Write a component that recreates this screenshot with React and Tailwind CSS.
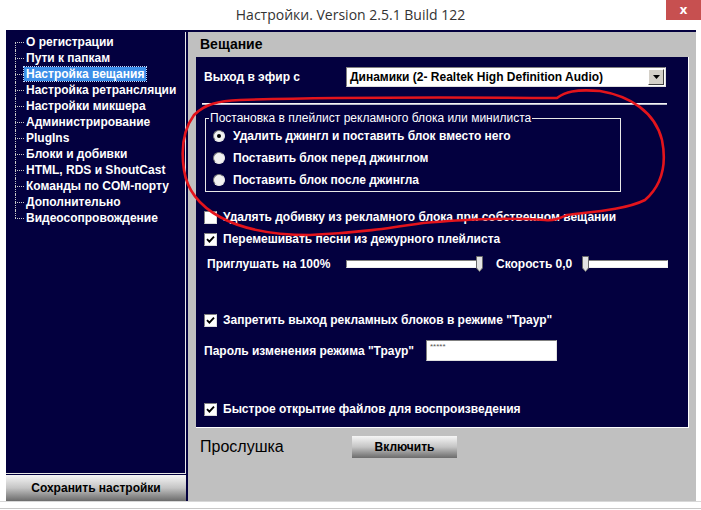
import React from "react";

const treeItems = [
  "О регистрации",
  "Пути к папкам",
  "Настройка вещания",
  "Настройка ретрансляции",
  "Настройки микшера",
  "Администрирование",
  "PlugIns",
  "Блоки и добивки",
  "HTML, RDS и ShoutCast",
  "Команды по COM-порту",
  "Дополнительно",
  "Видеосопровождение",
];

const Check = ({ checked }) => (
  <span className="w-[13px] h-[13px] shrink-0 bg-white border border-t-[#808080] border-l-[#808080] border-r-[#dcdcdc] border-b-[#dcdcdc] flex items-center justify-center">
    {checked && (
      <svg width="9" height="9" viewBox="0 0 9 9">
        <path d="M1 4.2 L3.4 6.6 L8 1.6" stroke="#000" strokeWidth="1.9" fill="none" />
      </svg>
    )}
  </span>
);

const Radio = ({ on }) => (
  <span className="w-[12px] h-[12px] shrink-0 rounded-full bg-[#f2f2f2] border border-t-[#7a7a7a] border-l-[#7a7a7a] border-r-[#e8e8e8] border-b-[#e8e8e8] flex items-center justify-center">
    {on && <span className="w-[4px] h-[4px] rounded-full bg-black" />}
  </span>
);

const Slider = ({ width, pos }) => (
  <div className={`relative h-[8px] bg-white border border-t-[#808080] border-l-[#808080] border-r-[#f0f0f0] border-b-[#f0f0f0] ${width}`}>
    <svg
      className={`absolute top-[-5px] ${pos}`}
      width="7"
      height="16"
      viewBox="0 0 7 16"
    >
      <polygon points="0.5,0.5 6.5,0.5 6.5,12 3.5,15.5 0.5,12" fill="#e4e4e4" stroke="#6a6a6a" />
    </svg>
  </div>
);

export default function App() {
  return (
    <div className="relative w-[701px] h-[510px] bg-white overflow-hidden font-['Liberation_Sans',Arial,sans-serif]">
      {/* title bar */}
      <div className="relative h-[30px] flex items-center justify-center pb-[2px]">
        <span className="text-[14px] text-[#333] font-['Open_Sans',sans-serif]">
          Настройки. Version 2.5.1 Build 122
        </span>
        <div className="absolute top-0 right-0 w-[35px] h-[20px] bg-[#c75050] flex items-center justify-center text-white text-[13px] font-['Open_Sans',sans-serif] font-bold">
          x
        </div>
      </div>

      {/* window body */}
      <div className="ml-[6px] w-[690px] h-[471px] flex border-t-2 border-[#03003f]">
        {/* left column */}
        <div className="w-[182px] flex flex-col bg-[#03003f] pr-[2px]">
          <div className="flex-1 border-r border-b border-[#e6e6e6] pt-[2px] pl-[9px]">
            {treeItems.map((item, i) => (
              <div key={item} className="flex h-[16px]">
                <div className="w-[9px] flex flex-col shrink-0">
                  <div className={`h-[8px] ${i === 0 ? "" : "border-l border-dotted border-[#c8c8c8]"}`} />
                  <div
                    className={`flex-1 border-t border-dotted border-[#c8c8c8] ${
                      i === treeItems.length - 1 ? "" : "border-l"
                    }`}
                  />
                </div>
                <div className="flex items-center">
                  <span
                    className={`text-[12px] font-bold leading-[14px] px-[2px] text-white ${
                      item === "Настройка вещания" ? "bg-[#3c8ee8] outline outline-dotted outline-[#c0d8ff]" : ""
                    }`}
                  >
                    {item}
                  </span>
                </div>
              </div>
            ))}
          </div>
          <div className="mt-[1px] h-[26px] bg-linear-to-b from-[#f6f6f6] via-[#c4c4c4] to-[#6c6c6c] flex items-center justify-center text-[12px] font-bold text-black">
            Сохранить настройки
          </div>
        </div>

        {/* right panel */}
        <div className="flex-1 bg-[#c0c0c0] flex flex-col">
          <div className="h-[25px] flex items-center pl-[12px] text-[14px] font-bold text-black">Вещание</div>

          <div className="ml-[8px] mr-[7px] h-[371px] bg-[#03003f] border-r border-b border-white flex flex-col text-white text-[12px] font-bold">
            {/* output device */}
            <div className="mt-[10px] h-[20px] flex items-center">
              <span className="w-[150px] pl-[8px]">Выход в эфир с</span>
              <div className="w-[320px] h-[20px] bg-white border border-t-[#808080] border-l-[#808080] border-r-[#e0e0e0] border-b-[#e0e0e0] flex items-center pl-[3px] pr-[1px] text-black">
                <span className="flex-1">Динамики (2- Realtek High Definition Audio)</span>
                <span className="w-[16px] h-[16px] bg-[#d4d0c8] border border-t-white border-l-white border-r-[#404040] border-b-[#404040] flex items-center justify-center">
                  <svg width="7" height="4" viewBox="0 0 7 4">
                    <polygon points="0,0 7,0 3.5,4" fill="#000" />
                  </svg>
                </span>
              </div>
            </div>

            {/* separator */}
            <div className="mt-[16px] ml-[6px] w-[465px] h-[2px] border-t border-[#f4f4f4] border-b border-b-[#b8b8c8]" />

            {/* group box */}
            <fieldset className="mt-[6px] ml-[9px] w-[416px] border border-[#e8e8e8] px-[7px] pb-[1px]">
              <legend className="ml-[-4px] px-[1px] text-[12px] font-normal leading-[14px] text-white">
                Постановка в плейлист рекламного блока или минилиста
              </legend>
              {[
                ["Удалить джингл и поставить блок вместо него", true],
                ["Поставить блок перед джинглом", false],
                ["Поставить блок после джингла", false],
              ].map(([label, on], i) => (
                <div key={label} className={`${i === 2 ? "h-[21px]" : "h-[22px]"} flex items-center gap-[8px]`}>
                  <Radio on={on} />
                  <span>{label}</span>
                </div>
              ))}
            </fieldset>

            {/* checkboxes */}
            <div className="mt-[14px] h-[22px] flex items-center gap-[6px] pl-[8px]">
              <Check checked={false} />
              <span>Удалять добивку из рекламного блока при собственном вещании</span>
            </div>
            <div className="h-[22px] flex items-center gap-[6px] pl-[8px]">
              <Check checked />
              <span>Перемешивать песни из дежурного плейлиста</span>
            </div>

            {/* sliders */}
            <div className="mt-[4px] h-[20px] flex items-center">
              <span className="w-[150px] pl-[11px]">Приглушать на 100%</span>
              <Slider width="w-[137px]" pos="right-[-1px]" />
              <span className="ml-[13px] w-[86px]">Скорость 0,0</span>
              <Slider width="w-[86px]" pos="left-[-1px]" />
            </div>

            <div className="mt-[35px] h-[22px] flex items-center gap-[6px] pl-[8px]">
              <Check checked />
              <span>Запретить выход рекламных блоков в режиме "Траур"</span>
            </div>

            <div className="mt-[9px] h-[21px] flex items-center">
              <span className="w-[230px] pl-[8px]">Пароль изменения режима "Траур"</span>
              <div className="w-[131px] h-[21px] bg-white border border-t-[#808080] border-l-[#808080] border-r-[#e0e0e0] border-b-[#e0e0e0] pl-[3px] text-[8px] font-normal leading-[12px] text-[#555]">
                *****
              </div>
            </div>

            <div className="mt-[37px] h-[22px] flex items-center gap-[6px] pl-[8px]">
              <Check checked />
              <span>Быстрое открытие файлов для воспроизведения</span>
            </div>
          </div>

          {/* listen */}
          <div className="mt-[8px] h-[22px] flex items-center">
            <span className="w-[164px] pl-[12px] text-[16px] text-black">Прослушка</span>
            <div className="w-[105px] h-[22px] bg-linear-to-b from-[#f6f6f6] via-[#c4c4c4] to-[#6c6c6c] flex items-center justify-center text-[12px] font-bold text-black">
              Включить
            </div>
          </div>
        </div>
      </div>
      <div className="h-[9px] border-t border-[#d8d8d8]">
        <div className="mt-[6px] border-t border-[#c8c8c8]" />
      </div>

      {/* hand-drawn red marker */}
      <svg className="absolute top-0 left-0 pointer-events-none" width="701" height="510" viewBox="0 0 701 510">
        <path
          d="M557 98 C565 92 575 89 600 91 C630 96 655 112 662 140 C667 165 662 185 645 200 C625 210 590 212 567 215 C560 218 555 221 545 220 C500 217 460 220 423 223 C390 228 357 233 310 235 C270 235 240 228 220 217 C198 205 187 190 184 170 C181 150 183 130 194 115 C205 104 218 101 240 100 C300 98 420 97 557 98"
          fill="none"
          stroke="#e3141c"
          strokeWidth="2.6"
          strokeLinecap="round"
        />
      </svg>
    </div>
  );
}
